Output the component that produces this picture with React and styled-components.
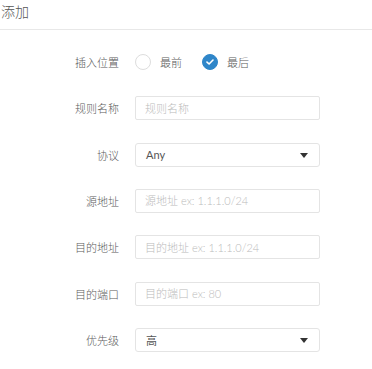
import React, { useState } from "react";
import styled, { createGlobalStyle } from "styled-components";

const GlobalStyle = createGlobalStyle`
  body {
    margin: 0;
    background: #fff;
    font-family: Lato, "Liberation Sans", "Noto Sans CJK SC", sans-serif;
  }
`;

const AddRulePage = () => {
  const [position, setPosition] = useState("last");

  return (
    <Page>
      <GlobalStyle />
      <Title>添加</Title>
      <Form>
        <Row>
          <Label>插入位置</Label>
          <RadioGroup>
            <RadioOption onClick={() => setPosition("first")}>
              <RadioCircle $checked={position === "first"}>
                {position === "first" && <CheckMark />}
              </RadioCircle>
              最前
            </RadioOption>
            <RadioOption onClick={() => setPosition("last")}>
              <RadioCircle $checked={position === "last"}>
                {position === "last" && <CheckMark />}
              </RadioCircle>
              最后
            </RadioOption>
          </RadioGroup>
        </Row>
        <Row>
          <Label>规则名称</Label>
          <TextInput placeholder="规则名称" />
        </Row>
        <Row>
          <Label>协议</Label>
          <Select value="Any" />
        </Row>
        <Row>
          <Label>源地址</Label>
          <TextInput placeholder="源地址 ex: 1.1.1.0/24" />
        </Row>
        <Row>
          <Label>目的地址</Label>
          <TextInput placeholder="目的地址 ex: 1.1.1.0/24" />
        </Row>
        <Row>
          <Label>目的端口</Label>
          <TextInput placeholder="目的端口 ex: 80" />
        </Row>
        <Row>
          <Label>优先级</Label>
          <Select value="高" />
        </Row>
      </Form>
    </Page>
  );
};

const CheckMark = () => (
  <svg width="8" height="6" viewBox="0 0 8 6">
    <path
      d="M1 3.1 L3.1 5 L7 1"
      fill="none"
      stroke="#fff"
      strokeWidth="1.6"
      strokeLinecap="round"
      strokeLinejoin="round"
    />
  </svg>
);

const Select = ({ value }) => (
  <SelectBox>
    <SelectValue>{value}</SelectValue>
    <Caret />
  </SelectBox>
);

const Page = styled.div`
  width: 372px;
  height: 369px;
  background: #fff;
`;

const Title = styled.div`
  box-sizing: border-box;
  height: 30px;
  padding-left: 1px;
  font-size: 14px;
  font-weight: 300;
  line-height: 24px;
  color: #555;
  border-bottom: 1px solid #e8e8e8;
`;

const Form = styled.div`
  display: flex;
  flex-direction: column;
  gap: 22.4px;
  padding-top: 19.8px;
`;

const Row = styled.div`
  display: grid;
  grid-template-columns: 119px 185px;
  column-gap: 16px;
  align-items: center;
  height: 24px;
`;

const Label = styled.div`
  font-size: 11px;
  font-weight: 300;
  color: #5a5a5a;
  text-align: right;
`;

const RadioGroup = styled.div`
  display: flex;
  align-items: center;
  gap: 20px;
`;

const RadioOption = styled.div`
  display: flex;
  align-items: center;
  gap: 9px;
  font-size: 11px;
  font-weight: 300;
  color: #5a5a5a;
  cursor: pointer;
`;

const RadioCircle = styled.span`
  width: 16px;
  height: 16px;
  border-radius: 50%;
  box-sizing: border-box;
  display: flex;
  align-items: center;
  justify-content: center;
  border: 1px solid ${(p) => (p.$checked ? "#2f86c9" : "#ddd")};
  background: ${(p) => (p.$checked ? "#2f86c9" : "#fff")};
`;

const TextInput = styled.input`
  box-sizing: border-box;
  height: 24px;
  width: 185px;
  border: 1px solid #e4e4e4;
  border-radius: 2px;
  padding: 0 9px;
  font-family: inherit;
  font-size: 11px;
  font-weight: 300;
  color: #555;
  outline: none;

  &::placeholder {
    color: #bbb;
  }
`;

const SelectBox = styled.div`
  box-sizing: border-box;
  height: 24px;
  width: 185px;
  border: 1px solid #e4e4e4;
  border-radius: 3px;
  padding: 0 11px 0 10px;
  display: flex;
  align-items: center;
  justify-content: space-between;
`;

const SelectValue = styled.span`
  font-size: 11px;
  font-weight: 400;
  color: #555;
`;

const Caret = styled.span`
  width: 0;
  height: 0;
  border-left: 4px solid transparent;
  border-right: 4px solid transparent;
  border-top: 5px solid #333;
  margin-top: 1px;
`;

export default AddRulePage;
